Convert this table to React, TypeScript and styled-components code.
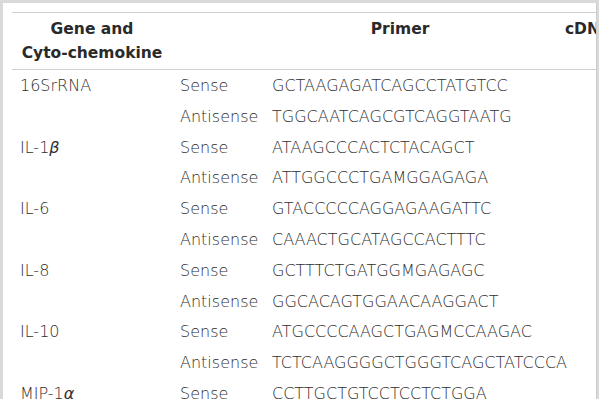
import styled, { createGlobalStyle } from "styled-components";

const GlobalStyle = createGlobalStyle`
  html, body {
    margin: 0;
    padding: 0;
    background: #d9d9d9;
  }
`;

interface PrimerRow {
  gene?: string
  greek?: string
  kind: string
  seq: string
  size?: string
}

const rows: PrimerRow[] = [
  { gene: "16SrRNA", kind: "Sense", seq: "GCTAAGAGATCAGCCTATGTCC", size: "" },
  { kind: "Antisense", seq: "TGGCAATCAGCGTCAGGTAATG" },
  { gene: "IL-1", greek: "β", kind: "Sense", seq: "ATAAGCCCACTCTACAGCT", size: "" },
  { kind: "Antisense", seq: "ATTGGCCCTGAMGGAGAGA" },
  { gene: "IL-6", kind: "Sense", seq: "GTACCCCCAGGAGAAGATTC", size: "" },
  { kind: "Antisense", seq: "CAAACTGCATAGCCACTTTC" },
  { gene: "IL-8", kind: "Sense", seq: "GCTTTCTGATGGMGAGAGC", size: "" },
  { kind: "Antisense", seq: "GGCACAGTGGAACAAGGACT" },
  { gene: "IL-10", kind: "Sense", seq: "ATGCCCCAAGCTGAGMCCAAGAC", size: "" },
  { kind: "Antisense", seq: "TCTCAAGGGGCTGGGTCAGCTATCCCA" },
  { gene: "MIP-1", greek: "α", kind: "Sense", seq: "CCTTGCTGTCCTCCTCTGGA", size: "" },
  { kind: "Antisense", seq: "GGCTGCTCGTCTCAAAGTAG" },
];

const Page = styled.div`
  padding: 3px 0 0 3px;
  height: 396px;
  overflow: hidden;
`;

const Panel = styled.div`
  width: 594px;
  height: 396px;
  background: #ffffff;
  border-right: 1px solid #cccccc;
  overflow: hidden;
  padding: 9px 0 0 9px;
  box-sizing: border-box;
`;

const Table = styled.table`
  border-collapse: collapse;
  table-layout: fixed;
  width: 710px;
  font-family: "DejaVu Sans", "Liberation Sans", sans-serif;
  color: #2e2e2e;
`;

const HeadRow = styled.tr`
  border-top: 1px solid #d0d0d0;
  border-bottom: 1px solid #d0d0d0;
`;

const Th = styled.th<{ $w: number }>`
  width: ${p => p.$w}px;
  padding: 4px 8px 4px;
  vertical-align: top;
  text-align: center;
  font-size: 15.5px;
  font-weight: bold;
  line-height: 24px;
  color: #2a2a2a;
  white-space: nowrap;
`;

const Td = styled.td`
  padding: 5px 8px 3px;
  font-size: 16px;
  font-weight: 300;
  line-height: 22.8px;
  white-space: nowrap;
  vertical-align: middle;
`;

const Greek = styled.i`
  font-style: italic;
  font-weight: 300;
`;

export default function App() {
  return (
    <Page>
      <GlobalStyle />
      <Panel>
        <Table>
          <thead>
            <HeadRow>
              <Th $w={144}>Gene and<br />Cyto-chemokine</Th>
              <Th $w={76}></Th>
              <Th $w={256}>Primer</Th>
              <Th $w={170}>cDNA size (bp)</Th>
            </HeadRow>
          </thead>
          <tbody>
            {rows.map((r, i) => (
              <tr key={i}>
                <Td>
                  {r.gene}
                  {r.greek && <Greek>{r.greek}</Greek>}
                </Td>
                <Td>{r.kind}</Td>
                <Td>{r.seq}</Td>
                <Td>{r.size}</Td>
              </tr>
            ))}
          </tbody>
        </Table>
      </Panel>
    </Page>
  );
}
